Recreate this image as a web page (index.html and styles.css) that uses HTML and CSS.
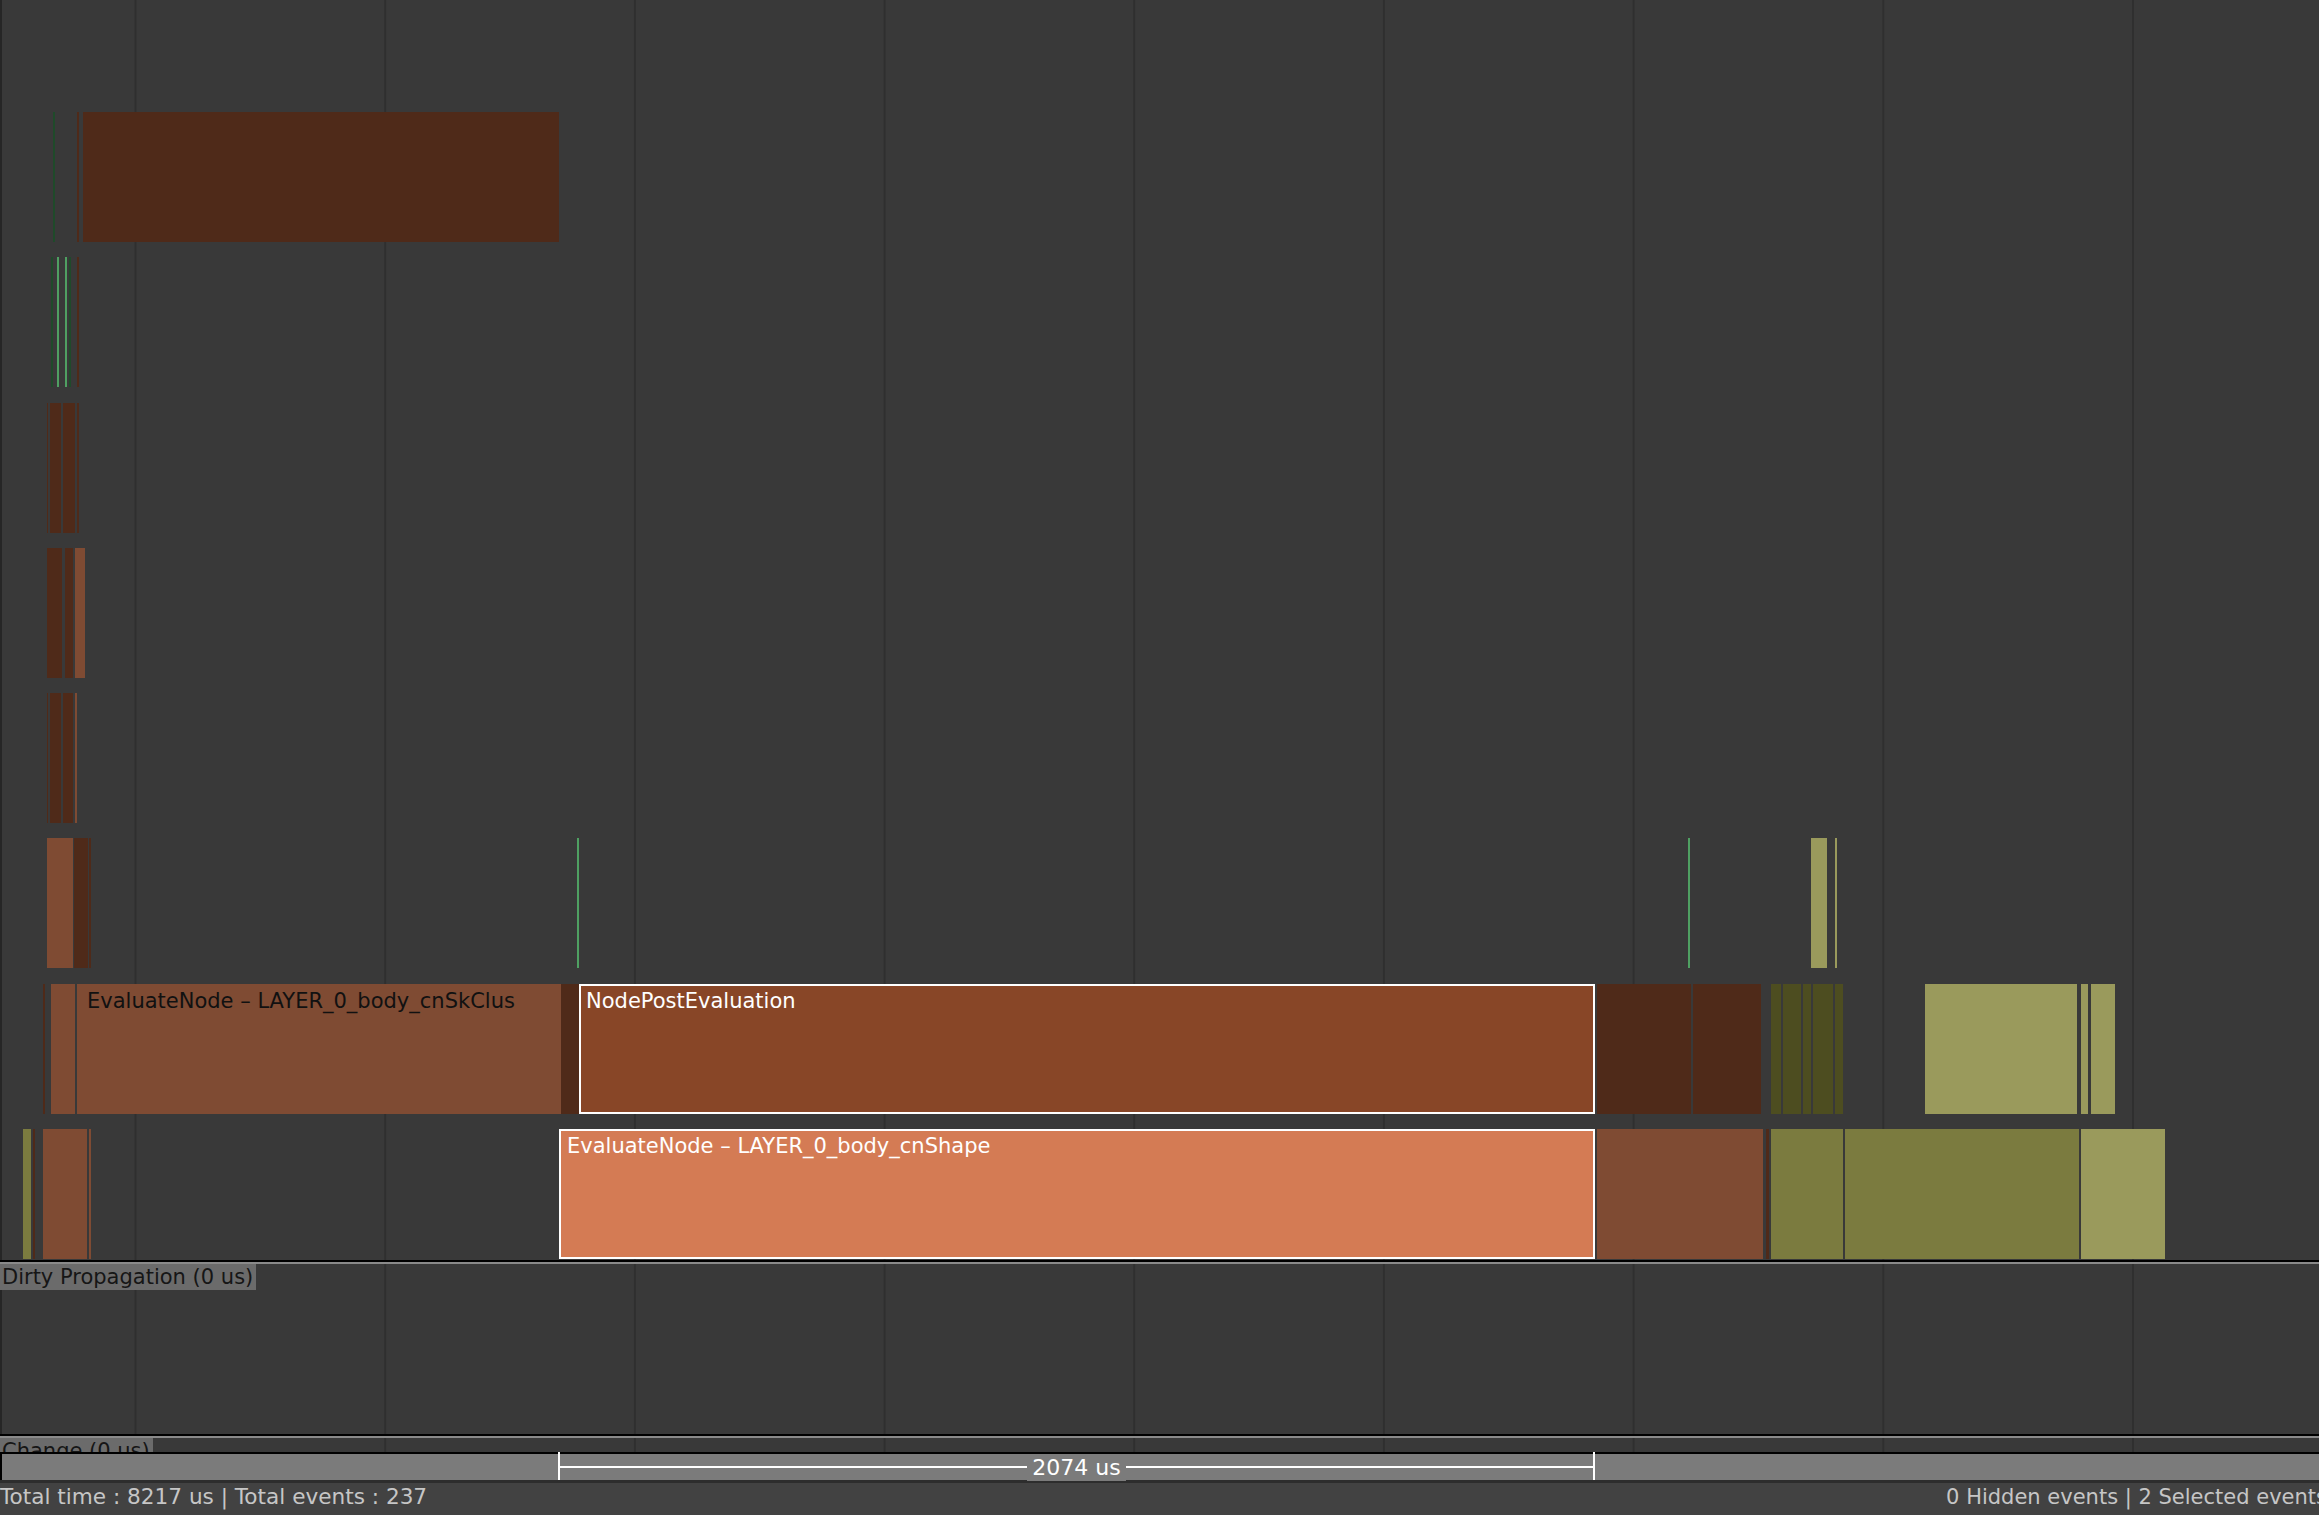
FILE: index.html
```html
<!DOCTYPE html>
<html lang="en">
<head>
<meta charset="utf-8">
<title>Profiler</title>
<link rel="stylesheet" href="styles.css">
</head>
<body>
<div class="app">
  <div class="pane main grid">
    <div class="rows">
      <div class="row">
        <div class="ev dg" style="left:53px;width:2px"></div>
        <div class="ev db" style="left:77px;width:2px"></div>
        <div class="ev db" style="left:83px;width:476px"></div>
      </div>
      <div class="row">
        <div class="ev dg" style="left:51px;width:2px"></div>
        <div class="ev lg" style="left:57px;width:2px"></div>
        <div class="ev lg" style="left:65px;width:2px"></div>
        <div class="ev dg" style="left:69px;width:2px"></div>
        <div class="ev db" style="left:77px;width:2px"></div>
      </div>
      <div class="row">
        <div class="ev db" style="left:47px;width:1px"></div>
        <div class="ev db" style="left:50px;width:11px"></div>
        <div class="ev db" style="left:63px;width:12px"></div>
        <div class="ev db" style="left:77px;width:2px"></div>
      </div>
      <div class="row">
        <div class="ev db" style="left:47px;width:15px"></div>
        <div class="ev db" style="left:65px;width:8px"></div>
        <div class="ev mb" style="left:75px;width:10px"></div>
      </div>
      <div class="row">
        <div class="ev db" style="left:47px;width:1px"></div>
        <div class="ev db" style="left:50px;width:11px"></div>
        <div class="ev db" style="left:63px;width:10px"></div>
        <div class="ev mb" style="left:75px;width:2px"></div>
      </div>
      <div class="row">
        <div class="ev mb" style="left:47px;width:26px"></div>
        <div class="ev db" style="left:74px;width:14px"></div>
        <div class="ev db" style="left:89px;width:2px"></div>
        <div class="ev lg" style="left:577px;width:2px"></div>
        <div class="ev lg" style="left:1688px;width:2px"></div>
        <div class="ev lo" style="left:1811px;width:16px"></div>
        <div class="ev lo" style="left:1835px;width:2px"></div>
      </div>
      <div class="row">
        <div class="ev db" style="left:43px;width:2px"></div>
        <div class="ev mb" style="left:51px;width:24px"></div>
        <div class="ev mb label dark" style="left:77px;width:484px">EvaluateNode – LAYER_0_body_cnSkClus</div>
        <div class="ev db" style="left:561px;width:18px"></div>
        <div class="ev np label sel" style="left:579px;width:1016px">NodePostEvaluation</div>
        <div class="ev db" style="left:1597px;width:94px"></div>
        <div class="ev db" style="left:1693px;width:68px"></div>
        <div class="ev do" style="left:1771px;width:10px"></div>
        <div class="ev do" style="left:1783px;width:18px"></div>
        <div class="ev do" style="left:1803px;width:8px"></div>
        <div class="ev do" style="left:1813px;width:20px"></div>
        <div class="ev do" style="left:1835px;width:8px"></div>
        <div class="ev lo" style="left:1925px;width:152px"></div>
        <div class="ev lo" style="left:2081px;width:7px"></div>
        <div class="ev lo" style="left:2091px;width:24px"></div>
      </div>
      <div class="row">
        <div class="ev ol" style="left:23px;width:8px"></div>
        <div class="ev db" style="left:33px;width:2px"></div>
        <div class="ev mb" style="left:43px;width:44px"></div>
        <div class="ev mb" style="left:89px;width:2px"></div>
        <div class="ev sal label sel" style="left:559px;width:1036px">EvaluateNode – LAYER_0_body_cnShape</div>
        <div class="ev mb" style="left:1597px;width:166px"></div>
        <div class="ev db" style="left:1766px;width:3px"></div>
        <div class="ev ol" style="left:1771px;width:72px"></div>
        <div class="ev ol" style="left:1845px;width:234px"></div>
        <div class="ev lo" style="left:2081px;width:84px"></div>
      </div>
    </div>
  </div>
  <div class="sep"></div>
  <div class="pane dirty grid">
    <span class="tag">Dirty Propagation (0 us)</span>
  </div>
  <div class="sep"></div>
  <div class="pane change grid">
    <span class="tag">Change (0 us)</span>
  </div>
  <div class="sep-black"></div>
  <div class="ruler">
    <div class="range" style="left:558px;width:1037px">
      <span class="measure">2074 us</span>
    </div>
  </div>
  <div class="status">
    <span class="status-left">Total time : 8217 us | Total events : 237</span>
    <span class="status-right">0 Hidden events | 2 Selected events</span>
  </div>
</div>
</body>
</html>
```

FILE: styles.css
```css
* { box-sizing: border-box; }

html, body {
  margin: 0;
  padding: 0;
  background: #393939;
  overflow: hidden;
}

body {
  width: 2319px;
  height: 1515px;
  font-family: "DejaVu Sans", "Liberation Sans", sans-serif;
}

.app {
  display: flex;
  flex-direction: column;
  width: 2319px;
  height: 1515px;
}

.grid {
  background-color: #393939;
  background-image: linear-gradient(to right, #2f2f2f 2px, transparent 2px);
  background-size: 249.7px 100%;
  background-position: 134.5px 0;
  box-shadow: inset 2px 0 0 #262626;
}

.pane {
  flex: none;
  overflow: hidden;
  position: relative;
}

.main {
  height: 1260px;
}

.rows {
  display: flex;
  flex-direction: column;
  gap: 15.3px;
  padding-top: 112px;
}

.row {
  position: relative;
  height: 130px;
}

.ev {
  position: absolute;
  top: 0;
  bottom: 0;
}

.db { background: #4f2a19; }
.mb { background: #7f4b33; }
.np { background: #884627; }
.sal { background: #d47b54; }
.lo { background: #9a9a5c; }
.ol { background: #7b7b3f; }
.do { background: #4d4d20; }
.dg { background: #1f4a2a; }
.lg { background: #4fa062; }

.label {
  font-size: 21px;
  line-height: 24px;
  white-space: nowrap;
  overflow: hidden;
}

.label.dark {
  color: #111;
  padding: 5px 0 0 10px;
}

.label.sel {
  color: #fff;
  border: 2px solid #fff;
  padding: 3px 0 0 5px;
}

.sal.sel {
  padding-left: 6px;
}

.sep {
  flex: none;
  height: 4px;
  border-top: 2px solid #000;
  background: #8a8a8a;
}

.dirty {
  height: 170px;
}

.change {
  height: 14px;
}

.tag {
  display: inline-block;
  background: #6b6b6b;
  color: #161616;
  font-size: 21px;
  line-height: 26px;
  padding: 0 3px 0 2px;
  white-space: nowrap;
}

.sep-black {
  flex: none;
  height: 2px;
  background: #000;
}

.ruler {
  flex: none;
  position: relative;
  height: 26px;
  background: #7b7b7b;
  box-shadow: inset 2px 0 0 #000;
}

.range {
  position: absolute;
  top: -2px;
  bottom: 0;
  border-left: 2px solid #fff;
  border-right: 2px solid #fff;
  display: flex;
  align-items: center;
  justify-content: center;
}

.range::before {
  content: "";
  position: absolute;
  left: 0;
  right: 0;
  top: 14px;
  height: 2px;
  background: #fff;
}

.measure {
  position: relative;
  background: #7b7b7b;
  color: #fff;
  font-size: 22px;
  line-height: 26px;
  padding: 0 5px;
  margin-top: 4px;
  white-space: nowrap;
}

.status {
  flex: none;
  height: 35px;
  border-top: 3px solid #2d2d2d;
  background: #424242;
  color: #c6c6c6;
  font-size: 21.6px;
  line-height: 28px;
  display: flex;
  justify-content: space-between;
  white-space: nowrap;
  overflow: hidden;
}

.status-right {
  font-size: 21px;
  margin-right: -8px;
}
```
